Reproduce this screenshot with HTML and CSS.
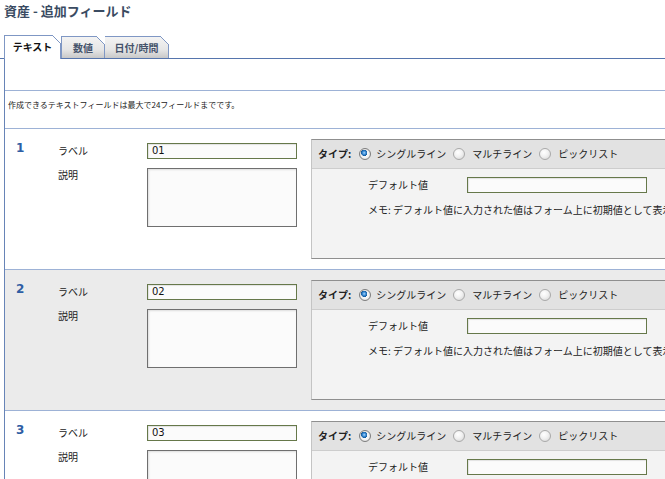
FILE: index.html
```html
<!DOCTYPE html>
<html lang="ja">
<head>
<meta charset="utf-8">
<title>資産 - 追加フィールド</title>
<link rel="stylesheet" href="styles.css">
</head>
<body>
<h1 class="title">資産 - 追加フィールド</h1>
<div class="tabs">
  <div class="tab active">テキスト</div>
  <div class="tab tab-num">数値</div>
  <div class="tab tab-date">日付/時間</div>
</div>
<div class="panel">
  <div class="toolbar"></div>
  <div class="notice">作成できるテキストフィールドは最大で24フィールドまでです。</div>

  <div class="row">
    <div class="num">1</div>
    <div class="labels"><div class="lbl-label">ラベル</div><div class="lbl-desc">説明</div></div>
    <div class="fields"><div class="input">01</div><div class="textarea"></div></div>
    <div class="type-panel">
      <div class="type-head">
        <span class="type-title">タイプ:</span>
        <span class="radio on first"></span><span class="opt">シングルライン</span>
        <span class="radio"></span><span class="opt">マルチライン</span>
        <span class="radio"></span><span class="opt">ピックリスト</span>
      </div>
      <div class="type-body">
        <div class="default-line"><span class="default-label">デフォルト値</span><div class="input wide"></div></div>
        <div class="memo">メモ: デフォルト値に入力された値はフォーム上に初期値として表示されます。</div>
      </div>
    </div>
  </div>

  <div class="row alt">
    <div class="num">2</div>
    <div class="labels"><div class="lbl-label">ラベル</div><div class="lbl-desc">説明</div></div>
    <div class="fields"><div class="input">02</div><div class="textarea"></div></div>
    <div class="type-panel">
      <div class="type-head">
        <span class="type-title">タイプ:</span>
        <span class="radio on first"></span><span class="opt">シングルライン</span>
        <span class="radio"></span><span class="opt">マルチライン</span>
        <span class="radio"></span><span class="opt">ピックリスト</span>
      </div>
      <div class="type-body">
        <div class="default-line"><span class="default-label">デフォルト値</span><div class="input wide"></div></div>
        <div class="memo">メモ: デフォルト値に入力された値はフォーム上に初期値として表示されます。</div>
      </div>
    </div>
  </div>

  <div class="row">
    <div class="num">3</div>
    <div class="labels"><div class="lbl-label">ラベル</div><div class="lbl-desc">説明</div></div>
    <div class="fields"><div class="input">03</div><div class="textarea"></div></div>
    <div class="type-panel">
      <div class="type-head">
        <span class="type-title">タイプ:</span>
        <span class="radio on first"></span><span class="opt">シングルライン</span>
        <span class="radio"></span><span class="opt">マルチライン</span>
        <span class="radio"></span><span class="opt">ピックリスト</span>
      </div>
      <div class="type-body">
        <div class="default-line"><span class="default-label">デフォルト値</span><div class="input wide"></div></div>
        <div class="memo">メモ: デフォルト値に入力された値はフォーム上に初期値として表示されます。</div>
      </div>
    </div>
  </div>
</div>
</body>
</html>
```
FILE: styles.css
```css
html, body {
  margin: 0;
  padding: 0;
  overflow: hidden;
  background: #fff;
}
body {
  font-family: "Noto Sans CJK JP", "DejaVu Sans", sans-serif;
  font-size: 10px;
  color: #222;
}
.title {
  margin: 0;
  padding: 3px 0 0 4px;
  height: 16px;
  font-size: 13px;
  line-height: 16px;
  font-weight: bold;
  color: #3a4b62;
}
.tabs {
  margin-top: 16px;
  display: flex;
  align-items: flex-end;
  height: 23px;
  padding-left: 4px;
  border-bottom: 1px solid #5675ad;
}
.tab {
  position: relative;
  box-sizing: border-box;
  font-weight: bold;
  font-size: 10px;
  text-align: center;
  border: 1px solid #7f97c4;
  border-bottom: 0;
}
.tab::after {
  content: "";
  position: absolute;
  top: -1px;
  right: -1px;
  width: 9px;
  height: 9px;
  background: linear-gradient(to bottom left, #fff 0, #fff calc(50% - 0.7px), #7f97c4 calc(50% - 0.7px), #7f97c4 calc(50% + 0.7px), transparent calc(50% + 0.7px));
}
.tab.active {
  width: 57px;
  height: 24px;
  line-height: 22px;
  margin-bottom: -1px;
  background: #fff;
  color: #111;
}
.tab-num, .tab-date {
  height: 22px;
  line-height: 21px;
  background: linear-gradient(#f3f3f3 0%, #e6e6e6 60%, #c8c8c8 100%);
  color: #45536b;
}
.tab-num {
  width: 44px;
}
.tab-date {
  width: 64px;
  border-left: 0;
}
.panel {
  margin-left: 4px;
  border-left: 1px solid #6784b7;
}
.toolbar {
  height: 31px;
  border-bottom: 1px solid #9db2d6;
}
.notice {
  height: 29px;
  padding: 8px 0 0 3px;
  font-size: 8px;
  line-height: 12px;
  border-bottom: 1px solid #9db2d6;
  white-space: nowrap;
}
.row {
  display: flex;
  height: 120px;
  padding: 10px 0;
  border-bottom: 1px solid #9db2d6;
}
.row.alt {
  background: #ebebeb;
}
.num {
  width: 42px;
  margin: 2px 0 0 11px;
  font-family: "DejaVu Sans", sans-serif;
  font-weight: bold;
  font-size: 12px;
  line-height: 14px;
  color: #2e5ea4;
}
.labels {
  width: 89px;
  margin-top: 4px;
}
.lbl-label {
  height: 16px;
  line-height: 16px;
}
.lbl-desc {
  margin-top: 9px;
  line-height: 13px;
}
.fields {
  width: 150px;
  margin-top: 4px;
}
.input {
  box-sizing: border-box;
  height: 16px;
  padding-left: 4px;
  border: 1px solid #66784a;
  background: #fbfbfb;
  box-shadow: inset 1px 1px 1px rgba(0, 0, 0, 0.1);
  font-family: "DejaVu Sans", sans-serif;
  font-size: 10px;
  line-height: 14px;
  color: #111;
}
.textarea {
  box-sizing: border-box;
  margin-top: 9px;
  height: 59px;
  border: 1px solid #6f6f6f;
  background: #fbfbfb;
  box-shadow: inset 1px 1px 2px rgba(0, 0, 0, 0.12);
}
.type-panel {
  flex: 1;
  min-width: 0;
  margin-left: 14px;
  overflow: hidden;
  border-left: 1px solid #c4c4c4;
  border-top: 1px solid #8f8f8f;
  border-bottom: 1px solid #8f8f8f;
}
.type-head {
  height: 28px;
  line-height: 28px;
  padding-left: 6px;
  background: #e2e2e2;
  border-bottom: 1px solid #cdcdcd;
  white-space: nowrap;
  display: flex;
  align-items: center;
}
.type-title {
  font-weight: bold;
  margin-right: 8px;
}
.radio {
  display: inline-block;
  box-sizing: border-box;
  width: 12px;
  height: 12px;
  border-radius: 50%;
  border: 1px solid #a9a9a9;
  background: radial-gradient(circle at 40% 35%, #ffffff 0%, #f1f1f1 45%, #d2d2d2 100%);
  margin: 0 7px 0 7px;
  flex: none;
}
.radio.first {
  margin-left: 0;
  margin-right: 5px;
}
.radio.on {
  border-color: #7d7d7d;
  background:
    radial-gradient(circle at 42% 38%, #a9d6ff 0, #3d8ed6 1.6px, #145a9e 3px, transparent 3.3px),
    radial-gradient(circle, #ffffff 0, #f2f2f2 4px, #cfcfcf 6px);
}
.type-body {
  height: 81px;
  padding: 8px 0 0 56px;
  background: #f3f3f3;
  white-space: nowrap;
}
.default-line {
  display: flex;
  align-items: center;
  height: 16px;
}
.default-label {
  width: 99px;
  line-height: 16px;
}
.input.wide {
  width: 180px;
  height: 16px;
}
.memo {
  margin-top: 10px;
  line-height: 14px;
}
```
